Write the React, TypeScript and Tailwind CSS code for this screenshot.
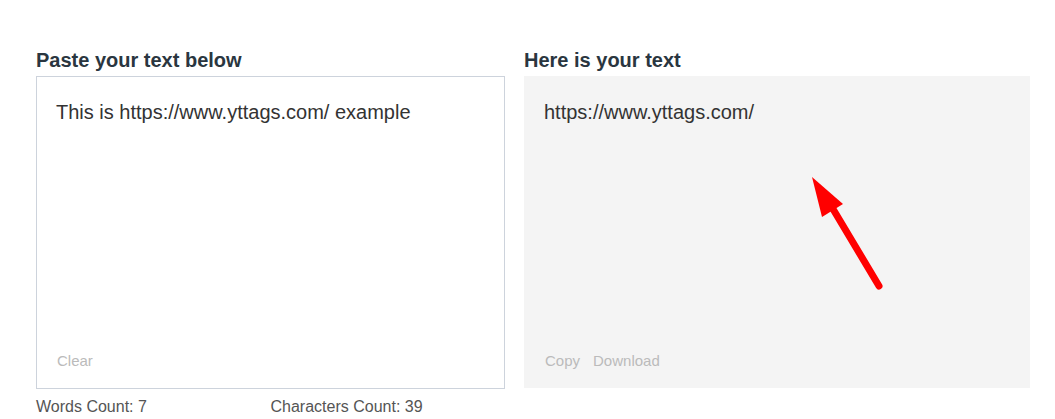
const sans = { fontFamily: '"Liberation Sans", Arial, sans-serif' };

const App = () => {
  const input = 'This is https://www.yttags.com/ example';
  const words = input.trim().split(/\s+/).length + 2;

  return (
    <div className="min-h-[419px] bg-white pt-[48px] pl-[36px]" style={sans}>
      <div className="flex gap-[19px]">
        {/* Input column */}
        <div className="w-[469px]">
          <h2 className="text-[20px] leading-[24px] font-bold text-[#2a3640] mb-[4px]">
            Paste your text below
          </h2>
          <div className="h-[313px] border border-[#cdd3dc] bg-white flex flex-col justify-between">
            <div className="px-[19px] pt-[21px] text-[20px] leading-[28px] text-[#333]">{input}</div>
            <div className="px-[20px] pb-[17px] text-[15px] leading-[20px] text-[#bbb]">
              <button className="cursor-pointer">Clear</button>
            </div>
          </div>
          <div className="grid grid-cols-2 mt-[6px] text-[16px] leading-[24px] text-[#555]">
            <span>Words Count: {words > 0 ? 7 : 0}</span>
            <span>Characters Count: {input.length}</span>
          </div>
        </div>

        {/* Output column */}
        <div className="w-[506px]">
          <h2 className="text-[20px] leading-[24px] font-bold text-[#2a3640] mb-[4px]">
            Here is your text
          </h2>
          <div className="relative h-[312px] bg-[#f4f4f4] flex flex-col justify-between">
            <div className="px-[20px] pt-[22px] text-[20px] leading-[28px] text-[#333]">
              https://www.yttags.com/
            </div>
            <div className="flex gap-[13px] px-[21px] pb-[17px] text-[15px] leading-[20px] text-[#bbb]">
              <button className="cursor-pointer">Copy</button>
              <button className="cursor-pointer">Download</button>
            </div>
            <svg className="absolute left-0 top-0 pointer-events-none" width="506" height="312" viewBox="0 0 506 312">
              <line x1="355" y1="210" x2="309" y2="133" stroke="#ff0000" strokeWidth="7" strokeLinecap="round" />
              <polygon points="288,101 298,141 319,128" fill="#ff0000" />
            </svg>
          </div>
        </div>
      </div>
    </div>
  );
};

export default App;
